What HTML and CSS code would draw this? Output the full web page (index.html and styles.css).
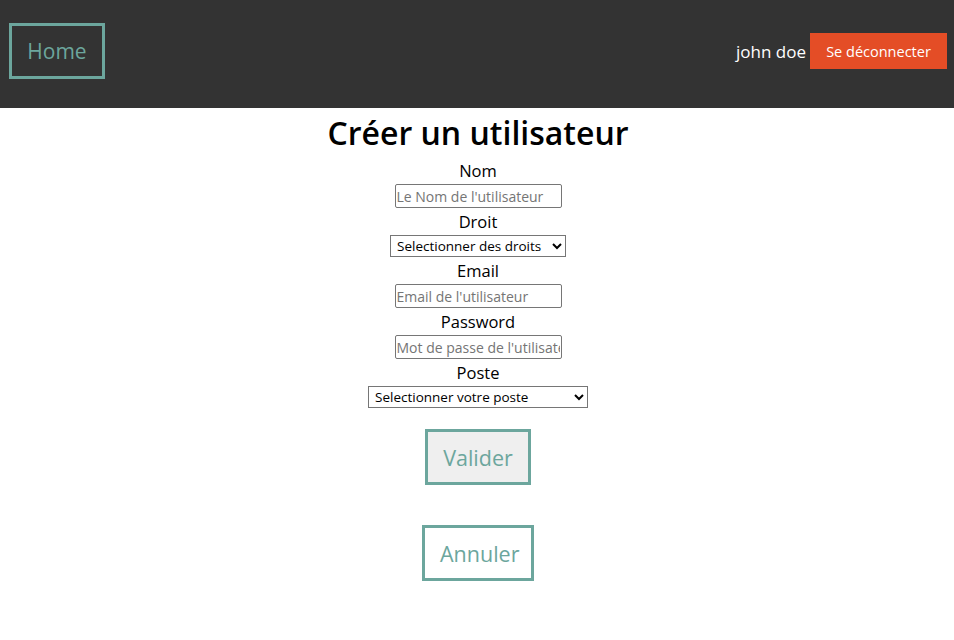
FILE: index.html
```html
<!DOCTYPE html>
<html lang="fr">
<head>
<meta charset="utf-8">
<title>Créer un utilisateur</title>
<link rel="stylesheet" href="styles.css">
</head>
<body>
<header class="topbar">
  <a class="home-btn" href="#">Home</a>
  <div class="user-area">
    <span class="user-name">john doe</span>
    <button class="logout-btn" type="button">Se déconnecter</button>
  </div>
</header>
<main class="page">
  <h1 class="title">Créer un utilisateur</h1>
  <form class="user-form">
    <label class="field-label" for="nom">Nom</label>
    <input class="text-input" id="nom" type="text" placeholder="Le Nom de l'utilisateur">
    <label class="field-label" for="droit">Droit</label>
    <select class="select select-droit" id="droit">
      <option>Selectionner des droits</option>
    </select>
    <label class="field-label" for="email">Email</label>
    <input class="text-input" id="email" type="email" placeholder="Email de l'utilisateur">
    <label class="field-label" for="pwd">Password</label>
    <input class="text-input" id="pwd" type="password" placeholder="Mot de passe de l'utilisateur">
    <label class="field-label" for="poste">Poste</label>
    <select class="select select-poste" id="poste">
      <option>Selectionner votre poste</option>
    </select>
    <button class="outline-btn submit-btn" type="submit">Valider</button>
    <button class="outline-btn cancel-btn" type="button">Annuler</button>
  </form>
</main>
</body>
</html>
```

FILE: styles.css
```css
* { box-sizing: border-box; }

body {
  margin: 0;
  font-family: "Open Sans", "DejaVu Sans", sans-serif;
  background: #fff;
  color: #000;
}

.topbar {
  height: 108px;
  background: #333333;
  display: flex;
  justify-content: space-between;
  align-items: center;
  padding: 0 7px 6px 9px;
}

.home-btn {
  display: block;
  height: 56px;
  width: 96px;
  border: 3px solid #6ca69d;
  color: #6ca69d;
  font-size: 21px;
  line-height: 50px;
  text-align: center;
  text-decoration: none;
}

.user-area {
  display: flex;
  align-items: center;
  gap: 4px;
}

.user-name {
  color: #fff;
  font-size: 17px;
}

.logout-btn {
  height: 36px;
  width: 137px;
  border: none;
  background: #e44d26;
  color: #fff;
  font-family: inherit;
  font-size: 14.5px;
  padding: 0;
}

.page {
  display: flex;
  flex-direction: column;
  align-items: center;
  padding-left: 2px;
}

.title {
  margin: 0;
  font-size: 32px;
  line-height: 49px;
  font-weight: 600;
}

.user-form {
  display: flex;
  flex-direction: column;
  align-items: center;
}

.field-label {
  font-size: 16.5px;
  line-height: 27px;
}

.text-input {
  width: 167px;
  height: 24px;
  font-family: inherit;
  font-size: 14px;
  padding: 0 1px;
  border: 1px solid #767676;
  border-radius: 2px;
}

.text-input::placeholder { color: #757575; }

.select {
  height: 22px;
  font-family: inherit;
  font-size: 13.5px;
  color: #000;
  border: 1px solid #767676;
  border-radius: 0;
  background: #fff;
  padding-left: 2px;
}

.select-droit { width: 176px; }
.select-poste { width: 220px; }

.outline-btn {
  height: 56px;
  border: 3px solid #6ca69d;
  color: #6ca69d;
  font-family: inherit;
  font-size: 21.5px;
  padding: 0 15px;
  margin-top: 21px;
}

.submit-btn {
  width: 106px;
  background: #efefef;
}

.cancel-btn {
  width: 112px;
  background: #fff;
  margin-top: 40px;
}
```
